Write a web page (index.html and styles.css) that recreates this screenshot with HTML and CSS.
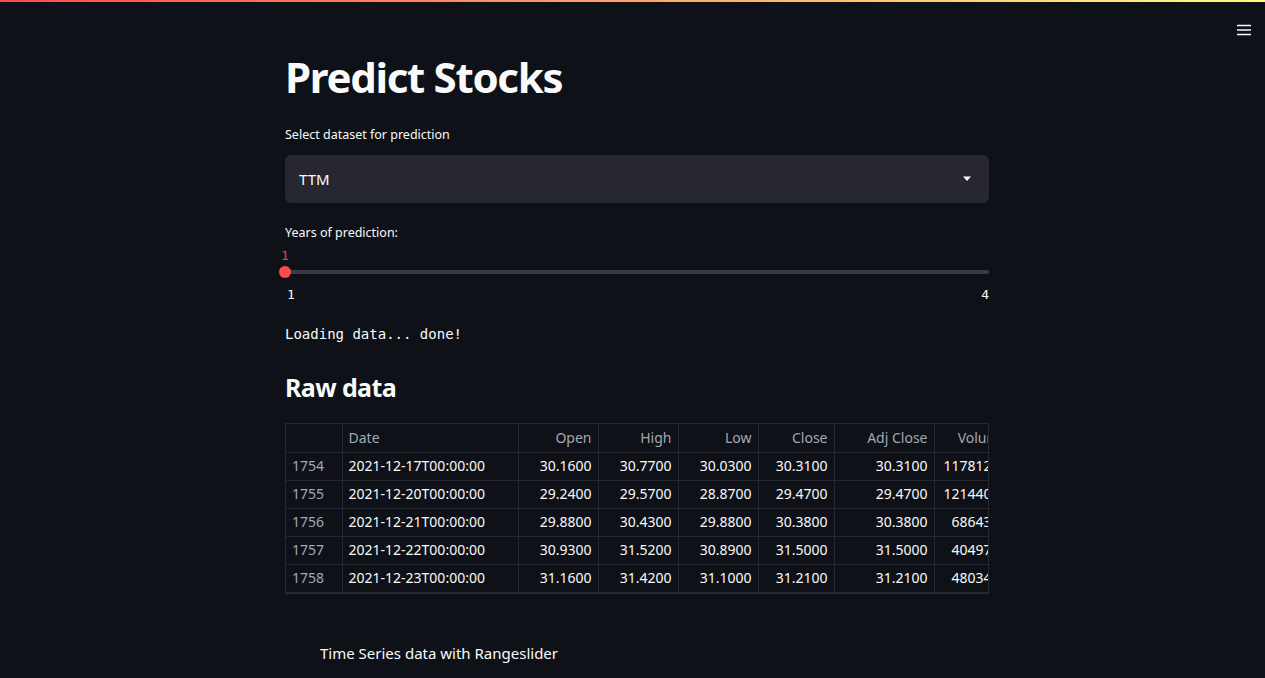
FILE: index.html
```html
<!DOCTYPE html>
<html>
<head>
<meta charset="utf-8">
<link rel="stylesheet" href="styles.css">
</head>
<body>
<div class="decoration"></div>
<button class="menu" aria-label="menu">
  <svg width="14" height="12" viewBox="0 0 14 12"><path d="M0 1.5h14M0 6h14M0 10.5h14" stroke="#fafafa" stroke-width="1.6"/></svg>
</button>
<main class="main">
  <h1 class="title">Predict Stocks</h1>
  <div class="field">
    <label class="label">Select dataset for prediction</label>
    <div class="select">
      <span>TTM</span>
      <svg width="10" height="6" viewBox="0 0 10 6"><path d="M1 0.5h8L5 5z" fill="#fafafa"/></svg>
    </div>
  </div>
  <div class="field slider-field">
    <label class="label">Years of prediction:</label>
    <div class="slider">
      <div class="thumb-value">1</div>
      <div class="track"><div class="thumb"></div></div>
      <div class="ticks"><span>1</span><span>4</span></div>
    </div>
  </div>
  <div class="loading">Loading data... done!</div>
  <h2 class="subtitle">Raw data</h2>
  <div class="table-wrap">
    <table class="df">
      <colgroup>
        <col style="width:56px"><col style="width:176px"><col style="width:80px"><col style="width:80px"><col style="width:80px"><col style="width:76px"><col style="width:100px"><col style="width:80px">
      </colgroup>
      <thead>
        <tr><th></th><th class="l">Date</th><th>Open</th><th>High</th><th>Low</th><th>Close</th><th>Adj Close</th><th>Volume</th></tr>
      </thead>
      <tbody>
        <tr><td class="idx">1754</td><td class="l">2021-12-17T00:00:00</td><td>30.1600</td><td>30.7700</td><td>30.0300</td><td>30.3100</td><td>30.3100</td><td>11781200</td></tr>
        <tr><td class="idx">1755</td><td class="l">2021-12-20T00:00:00</td><td>29.2400</td><td>29.5700</td><td>28.8700</td><td>29.4700</td><td>29.4700</td><td>12144000</td></tr>
        <tr><td class="idx">1756</td><td class="l">2021-12-21T00:00:00</td><td>29.8800</td><td>30.4300</td><td>29.8800</td><td>30.3800</td><td>30.3800</td><td>6864300</td></tr>
        <tr><td class="idx">1757</td><td class="l">2021-12-22T00:00:00</td><td>30.9300</td><td>31.5200</td><td>30.8900</td><td>31.5000</td><td>31.5000</td><td>4049700</td></tr>
        <tr><td class="idx">1758</td><td class="l">2021-12-23T00:00:00</td><td>31.1600</td><td>31.4200</td><td>31.1000</td><td>31.2100</td><td>31.2100</td><td>4803400</td></tr>
      </tbody>
    </table>
  </div>
  <div class="chart-title">Time Series data with Rangeslider</div>
</main>
</body>
</html>
```

FILE: styles.css
```css
* { box-sizing: border-box; }
html, body { margin: 0; padding: 0; }
body {
  background: #0e1117;
  color: #fafafa;
  font-family: "Noto Sans", "Open Sans", sans-serif;
  width: 1265px;
  height: 678px;
  overflow: hidden;
  position: relative;
}
.decoration {
  height: 2px;
  background: linear-gradient(90deg, #ff4b4b, #fffd80);
}
.menu {
  position: absolute;
  top: 23px;
  right: 14px;
  background: none;
  border: 0;
  padding: 0;
  width: 14px;
  height: 14px;
  display: flex;
  align-items: center;
  justify-content: center;
}
.main {
  width: 704px;
  margin: 0 auto 0 285px;
  padding-top: 49px;
}
.title {
  font-size: 42px;
  font-weight: 700;
  margin: 0;
  line-height: 52px;
  letter-spacing: -1.3px;
}
.field { margin-top: 22px; }
.label {
  display: block;
  font-size: 12.5px;
  line-height: 20px;
  height: 20px;
  margin-bottom: 10px;
}
.select {
  height: 48px;
  background: #262730;
  border-radius: 6px;
  display: flex;
  align-items: center;
  justify-content: space-between;
  padding: 0 17px 0 14px;
  font-size: 15px;
}
.slider-field { margin-top: 20px; }
.slider-field .label { margin-bottom: 5px; }
.slider { position: relative; }
.thumb-value {
  font-family: "DejaVu Sans Mono", monospace;
  font-size: 13px;
  color: #ff4b4b;
  line-height: 16px;
  height: 16px;
  margin-top: 1px;
  margin-left: -4px;
  opacity: 0.9;
}
.track {
  position: relative;
  height: 4px;
  background: #3a3c45;
  border-radius: 2px;
  margin-top: 6px;
}
.thumb {
  position: absolute;
  left: -6px;
  top: -4px;
  width: 12px;
  height: 12px;
  border-radius: 50%;
  background: #ff4b4b;
}
.ticks {
  display: flex;
  justify-content: space-between;
  font-family: "DejaVu Sans Mono", monospace;
  font-size: 13px;
  line-height: 16px;
  margin-top: 13px;
  padding: 0 0 0 1px;
}
.ticks span:first-child { margin-left: 1px; }
.loading {
  font-family: "DejaVu Sans Mono", monospace;
  font-size: 14px;
  line-height: 20px;
  margin-top: 21px;
}
.subtitle {
  font-size: 25px;
  font-weight: 700;
  margin: 25px 0 0;
  line-height: 36px;
  letter-spacing: -0.6px;
}
.table-wrap {
  margin-top: 18px;
  width: 704px;
  overflow: hidden;
  border: 1px solid #262730;
}
.df {
  border-collapse: collapse;
  table-layout: fixed;
  width: 728px;
  font-size: 14px;
}
.df th, .df td {
  height: 28px;
  padding: 0 6px;
  text-align: right;
  border: 1px solid #262730;
  white-space: nowrap;
  overflow: hidden;
  line-height: 26px;
}
.df tr:first-child th { border-top: 0; }
.df th:first-child, .df td:first-child { border-left: 0; }
.df th {
  font-weight: 400;
  color: #a3a8b4;
}
.df td { color: #fafafa; }
.df .l { text-align: left; }
.df .idx { color: #a3a8b4; text-align: left; }
.chart-title {
  margin-top: 48px;
  margin-left: 35px;
  font-size: 15px;
  line-height: 22px;
}
```
